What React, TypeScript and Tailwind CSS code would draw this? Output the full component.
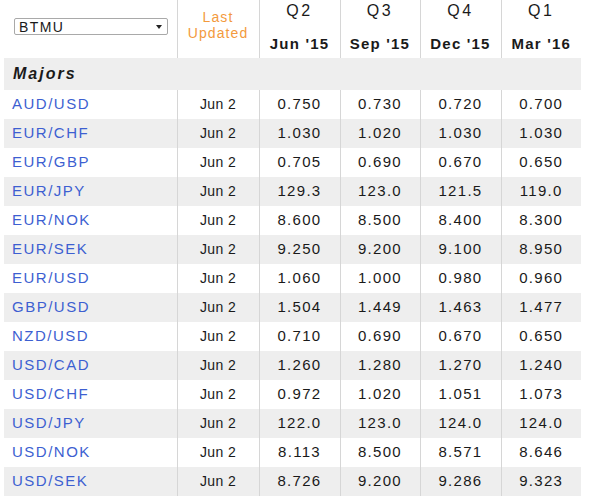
const QUARTERS = [
  { q: "Q2", date: "Jun '15" },
  { q: "Q3", date: "Sep '15" },
  { q: "Q4", date: "Dec '15" },
  { q: "Q1", date: "Mar '16" },
];

const ROWS: [string, string[]][] = [
  ["AUD/USD", ["0.750", "0.730", "0.720", "0.700"]],
  ["EUR/CHF", ["1.030", "1.020", "1.030", "1.030"]],
  ["EUR/GBP", ["0.705", "0.690", "0.670", "0.650"]],
  ["EUR/JPY", ["129.3", "123.0", "121.5", "119.0"]],
  ["EUR/NOK", ["8.600", "8.500", "8.400", "8.300"]],
  ["EUR/SEK", ["9.250", "9.200", "9.100", "8.950"]],
  ["EUR/USD", ["1.060", "1.000", "0.980", "0.960"]],
  ["GBP/USD", ["1.504", "1.449", "1.463", "1.477"]],
  ["NZD/USD", ["0.710", "0.690", "0.670", "0.650"]],
  ["USD/CAD", ["1.260", "1.280", "1.270", "1.240"]],
  ["USD/CHF", ["0.972", "1.020", "1.051", "1.073"]],
  ["USD/JPY", ["122.0", "123.0", "124.0", "124.0"]],
  ["USD/NOK", ["8.113", "8.500", "8.571", "8.646"]],
  ["USD/SEK", ["8.726", "9.200", "9.286", "9.323"]],
];

export default function App() {
  return (
    <div
      className="bg-white w-[591px] h-[504px] pl-[4px] text-[#1a1a1a]"
      style={{ fontFamily: '"Liberation Sans", Arial, sans-serif' }}
    >
      <table className="table-fixed border-collapse w-[577px]">
        <colgroup>
          <col className="w-[173px]" />
          <col className="w-[82px]" />
          <col className="w-[81px]" />
          <col className="w-[80px]" />
          <col className="w-[81px]" />
          <col className="w-[80px]" />
        </colgroup>
        <thead>
          <tr className="h-[58px]">
            <th className="p-0 align-top text-left">
              {/* broker picker */}
              <div className="ml-[10px] mt-[18px] w-[154px] h-[17px] border border-[#a9a9a9] rounded-[2px] bg-white flex items-center justify-between pl-[4px] pr-[5px]">
                <span className="text-[14px] font-normal tracking-[1.4px] leading-none">BTMU</span>
                <svg width="6" height="4" viewBox="0 0 6 4">
                  <polygon points="0,0 6,0 3,4" fill="#222" />
                </svg>
              </div>
            </th>
            <th className="p-0 align-top border-l border-[#d6d6d6] font-normal text-[14px] leading-[16px] tracking-[1.1px] text-[#f39a3d]">
              <div className="pt-[9px]">
                <div>Last</div>
                <div>Updated</div>
              </div>
            </th>
            {QUARTERS.map((col) => (
              <th key={col.q} className="p-0 align-top border-l border-[#d6d6d6]">
                <div className="pt-[2px] text-[16px] leading-[18px] font-normal tracking-[2.5px]">
                  {col.q}
                </div>
                <div className="mt-[15px] text-[15px] leading-[18px] font-bold tracking-[1.2px]">
                  {col.date}
                </div>
              </th>
            ))}
          </tr>
        </thead>
        <tbody>
          <tr className="h-[32px] bg-[#eeeeee]">
            <td colSpan={6} className="p-0 pl-[9px] align-middle">
              <span className="text-[16px] font-bold italic tracking-[2px]">Majors</span>
            </td>
          </tr>
          {ROWS.map(([pair, values], i) => (
            <tr key={pair} className={`h-[29px] ${i % 2 === 1 ? "bg-[#eeeeee]" : "bg-white"}`}>
              <td className="p-0 pl-[8px] align-middle text-[15px] tracking-[1.5px] text-[#3d5fd1]">
                {pair}
              </td>
              <td className="p-0 align-middle text-center border-l border-[#d6d6d6] text-[14px] tracking-[0.4px]">
                Jun 2
              </td>
              {values.map((v, j) => (
                <td
                  key={j}
                  className="p-0 align-middle text-center border-l border-[#d6d6d6] text-[15px] tracking-[1.3px]"
                >
                  {v}
                </td>
              ))}
            </tr>
          ))}
        </tbody>
      </table>
    </div>
  );
}
